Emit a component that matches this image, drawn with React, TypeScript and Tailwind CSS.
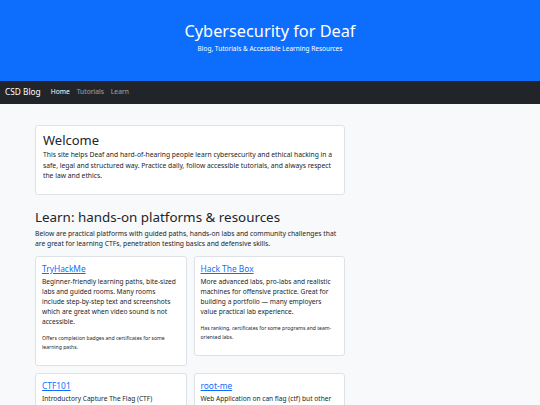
const cards = [
  {
    title: "TryHackMe",
    body: "Beginner-friendly learning paths, bite-sized labs and guided rooms. Many rooms include step-by-step text and screenshots which are great when video sound is not accessible.",
    note: "Offers completion badges and certificates for some learning paths.",
  },
  {
    title: "Hack The Box",
    body: "More advanced labs, pro-labs and realistic machines for offensive practice. Great for building a portfolio — many employers value practical lab experience.",
    note: "Has ranking, certificates for some programs and team-oriented labs.",
  },
  {
    title: "CTF101",
    body: "Introductory Capture The Flag (CTF) resources covering the basics of each category.",
    note: "",
  },
  {
    title: "root-me",
    body: "Web Application on can flag (ctf) but other challenges across many categories.",
    note: "",
  },
];

function PlatformCard({ title, body, note }: { title: string; body: string; note: string }) {
  return (
    <div className="bg-white border border-[#dee2e6] rounded-[3px] px-[6px] pt-[5px] pb-[13px] self-start">
      <a href="#" className="block text-[8.4px] leading-[14px] text-[#0d6efd] underline mb-[1px]">
        {title}
      </a>
      <p className="text-[6.6px] leading-[10px] text-[#212529]">{body}</p>
      {note && <p className="mt-[7px] text-[5.1px] leading-[9px] text-[#212529]">{note}</p>}
    </div>
  );
}

export default function App() {
  return (
    <div className="min-h-[405px] bg-[#f8f9fa] font-['Noto_Sans',sans-serif] text-[#212529]">
      <header className="h-[81px] bg-[#0d6efd] flex flex-col items-center pt-[21px] text-white">
        <h1 className="text-[16.3px] leading-[20px] font-normal">Cybersecurity for Deaf</h1>
        <p className="mt-[3px] text-[6.5px] leading-[10px]">Blog, Tutorials &amp; Accessible Learning Resources</p>
      </header>
      <nav className="h-[23px] bg-[#212529] flex items-center px-[5px]">
        <span className="text-[8.3px] text-white mr-[10px]">CSD Blog</span>
        <div className="flex gap-[7px] text-[6.7px]">
          <a href="#" className="text-white">Home</a>
          <a href="#" className="text-white/55">Tutorials</a>
          <a href="#" className="text-white/55">Learn</a>
        </div>
      </nav>
      <main className="w-[310px] ml-[35px] pt-[21px]">
        <section className="h-[70px] bg-white border border-[#dee2e6] rounded-[3px] px-[7px] pt-[4px]">
          <h2 className="text-[13px] leading-[20px]">Welcome</h2>
          <p className="text-[6.75px] leading-[10.5px]">
            This site helps Deaf and hard-of-hearing people learn cybersecurity and ethical hacking in a safe, legal and structured way. Practice daily, follow accessible tutorials, and always respect the law and ethics.
          </p>
        </section>
        <h2 className="mt-[12px] text-[13.4px] leading-[20px]">Learn: hands-on platforms &amp; resources</h2>
        <p className="mt-[2px] text-[6.75px] leading-[10px]">
          Below are practical platforms with guided paths, hands-on labs and community challenges that are great for learning CTFs, penetration testing basics and defensive skills.
        </p>
        <div className="mt-[7px] grid grid-cols-2 gap-x-[7px] gap-y-[7px] items-start">
          {cards.map((c) => (
            <PlatformCard key={c.title} {...c} />
          ))}
        </div>
      </main>
    </div>
  );
}
